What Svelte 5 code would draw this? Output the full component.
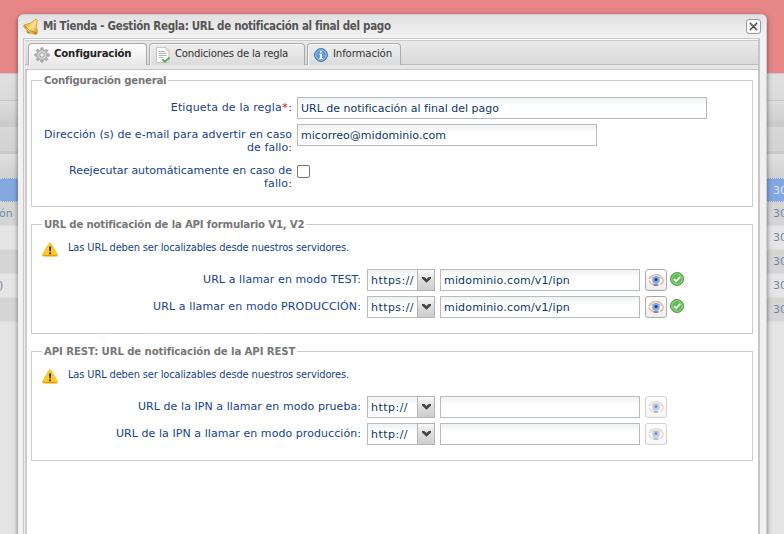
<script>
  const rows = [
    { kind: 'selected', left: '', right: '30' },
    { kind: 'dark', left: 'ón', right: '30' },
    { kind: 'light', left: '', right: '30' },
    { kind: 'dark', left: '', right: '30' },
    { kind: 'light', left: ')', right: '30' },
    { kind: 'dark', left: '', right: '30' }
  ];
  const hint = 'Las URL deben ser localizables desde nuestros servidores.';
  const groups = [
    {
      title: 'URL de notificación de la API formulario V1, V2', width: 260,
      urls: [
        { label: 'URL a llamar en modo TEST:', width: 158, scheme: 'https://', sw: 43, value: 'midominio.com/v1/ipn' },
        { label: 'URL a llamar en modo PRODUCCIÓN:', width: 208, scheme: 'https://', sw: 43, value: 'midominio.com/v1/ipn' }
      ]
    },
    {
      title: 'API REST: URL de notificación de la API REST', width: 251,
      urls: [
        { label: 'URL de la IPN a llamar en modo prueba:', width: 223, scheme: 'http://', sw: 37, value: '' },
        { label: 'URL de la IPN a llamar en modo producción:', width: 245, scheme: 'http://', sw: 37, value: '' }
      ]
    }
  ];

  // Spread the tracking so that a caption takes its allotted width.
  function fit(node, width) {
    const natural = node.getBoundingClientRect().width;
    node.style.letterSpacing = (width - natural) / node.textContent.length + 'px';
  }
</script>

<div class="screen">
  <div class="page">
    <div class="banner"></div>
    <div class="bar bar1"></div>
    <div class="bar bar2"></div>
    <div class="bar bar3"></div>
    <div class="bar bar4"></div>
    {#each rows as r}
      <div class="row {r.kind}"><span>{r.left}</span><span class="num">{r.right}</span></div>
    {/each}
  </div>

  <div class="window">
    <header>
      <svg class="bell" width="16" height="18" viewBox="0 0 16 18">
        <defs><linearGradient id="gold" x1="0" y1="0" x2="1" y2="1"><stop offset="0" stop-color="#d58b12"/><stop offset=".3" stop-color="#f3b93c"/><stop offset=".55" stop-color="#ffe58a"/><stop offset="1" stop-color="#d48a13"/></linearGradient></defs>
        <path d="M10.6 3 Q12 .8 13.7 1.4 Q15 2.4 13.9 4.2 Q12.9 8.5 14.4 13.6 Q14.3 16.6 12.6 16.6 Q4.5 14.6 .6 8.4 Q.5 6.8 2.2 6.6 Q7.8 6 10.6 3Z" fill="url(#gold)" stroke="#c98a22" stroke-width=".7"/>
        <path d="M1.2 7.8 Q5.5 13.4 13.4 15.2" fill="none" stroke="#b9791a" stroke-width=".9"/>
        <path d="M3.6 12.4 Q3.6 16 7.6 15.4Z" fill="#b06f14"/>
      </svg>
      <span class="title"><span use:fit={347}>Mi Tienda - Gestión Regla: URL de notificación al final del pago</span></span>
      <button class="close" aria-label="Cerrar">
        <svg width="9" height="9" viewBox="0 0 9 9"><path d="M1 1 L8 8 M8 1 L1 8" stroke="#444" stroke-width="1.8" stroke-dasharray="1.5 .3"/></svg>
      </button>
    </header>

    <div class="body">
      <nav>
        <div class="tab active">
          <svg width="16" height="16" viewBox="0 0 16 16">
            <g fill="#b5b5b5" stroke="#8a8a8a" stroke-width=".5">
              {#each [0, 45, 90, 135] as a}
                <rect x="6.7" y=".6" width="2.6" height="14.8" rx=".9" transform="rotate({a} 8 8)"/>
              {/each}
            </g>
            <circle cx="8" cy="8" r="5.3" fill="#c6c6c6" stroke="#9a9a9a" stroke-width=".6"/>
            <circle cx="8" cy="8" r="3.7" fill="#d4d4d4"/>
            <circle cx="8" cy="8" r="2.2" fill="#f2f2f2" stroke="#909090" stroke-width=".8"/>
          </svg>
          <span use:fit={77}>Configuración</span>
        </div>
        <div class="tab second">
          <svg width="16" height="16" viewBox="0 0 16 16">
            <path d="M1.5.5H11L14 3.5V15.5H1.5Z" fill="#fafafa" stroke="#c5c5c5"/>
            <path d="M11 .5V3.5H14" fill="#ddd" stroke="#c5c5c5" stroke-width=".7"/>
            <path d="M4 4.5H10M4 6.5H11.5M4 8.5H11.5M4 10.5H8" stroke="#aaa" stroke-width=".9"/>
            <path d="M7.3 12.4 9.8 14.8 14.6 10.6" fill="none" stroke="#60a957" stroke-width="2"/>
          </svg>
          <span use:fit={113}>Condiciones de la regla</span>
        </div>
        <div class="tab third">
          <svg width="14" height="14" viewBox="0 0 14 14">
            <circle cx="7" cy="7" r="6.4" fill="#4f88c3" stroke="#3f73ad"/>
            <circle cx="7" cy="7" r="5.3" fill="#659bd0" stroke="#a9cbed" stroke-width=".8"/>
            <path d="M6 3H8V4.6H6ZM5.4 5.7H8V10H9V11H5.2V10H6.2V6.7H5.4Z" fill="#fff"/>
          </svg>
          <span use:fit={59}>Información</span>
        </div>
      </nav>

      <main>
        <section class="general">
          <h2><span use:fit={122}>Configuración general</span></h2>
          <div class="field">
            <div class="label"><div><span use:fit={111}>Etiqueta de la regla</span><b>*</b>:</div></div>
            <div class="input wide"><span use:fit={198}>URL de notificación al final del pago</span></div>
          </div>
          <div class="field">
            <div class="label">
              <div><span use:fit={248}>Dirección (s) de e-mail para advertir en caso</span></div>
              <div><span use:fit={45}>de fallo:</span></div>
            </div>
            <div class="input mid"><span use:fit={145}>micorreo@midominio.com</span></div>
          </div>
          <div class="field again">
            <div class="label">
              <div><span use:fit={223}>Reejecutar automáticamente en caso de</span></div>
              <div><span use:fit={28}>fallo:</span></div>
            </div>
            <div class="check"></div>
          </div>
        </section>

        {#each groups as g}
          <section class="urls">
            <h2><span use:fit={g.width}>{g.title}</span></h2>
            <div class="hint">
              <svg width="16" height="15" viewBox="0 0 16 15">
                <path d="M8 .9 Q8.8.9 9.3 1.9 L15.2 12 Q16 14.2 14.2 14.2 H1.8 Q0 14.2 .8 12 L6.7 1.9 Q7.2.9 8 .9Z" fill="#ffcb26" stroke="#efb62a" stroke-width=".8"/>
                <path d="M1.2 13.4H14.8" stroke="#dd9a18" stroke-width="1"/>
                <path d="M7 4.5H9.2L8.7 9.5H7.5ZM7.1 10.5H9V12.2H7.1Z" fill="#33270b"/>
              </svg>
              <span use:fit={281}>{hint}</span>
            </div>
            {#each g.urls as u}
              <div class="field">
                <div class="label url"><div><span use:fit={u.width}>{u.label}</span></div></div>
                <div class="combo">
                  <div class="input scheme"><span use:fit={u.sw}>{u.scheme}</span></div>
                  <div class="trigger"><svg width="9" height="6" viewBox="0 0 9 6"><path d="M0 0H2.3L4.5 2.1 6.7 0H9V1.5L4.5 5.7 0 1.5Z" fill="#444"/></svg></div>
                </div>
                <div class="input address">{#if u.value}<span use:fit={126}>{u.value}</span>{/if}</div>
                <div class="eye" class:off={!u.value}>
                  <svg width="16" height="14" viewBox="0 0 16 14">
                    <path d="M.7 7.4 Q3.6 3 8 3 T15.3 7 Q14.6 11.9 8.4 12 Q3.4 11.8 .7 7.4Z" fill="#fff"/>
                    <path d="M.9 5.8 Q3.5 1.7 8.2 1.7 T15.2 6.6 Q15.4 10.2 12 11.6" fill="none" stroke="#e3b496" stroke-width="1.3"/>
                    <path d="M.8 7.6 Q3.2 11.4 6.6 12" fill="none" stroke="#e3b496" stroke-width="1.2"/>
                    <path d="M2.5 5.6 Q8 1.6 13.6 5.6" fill="none" stroke="#c9a28c" stroke-width=".7"/>
                    <circle cx="8" cy="6.9" r="3.9" fill="#83aaea"/>
                    <circle cx="8" cy="6.4" r="1.5" fill="#24395c"/>
                    <path d="M5.8 12H10.4" stroke="#4f4f4f" stroke-width="1.3"/>
                  </svg>
                </div>
                {#if u.value}
                  <svg class="ok" width="14" height="14" viewBox="0 0 14 14">
                    <circle cx="7" cy="7" r="6.5" fill="#4cac45" stroke="#4a9d44"/>
                    <circle cx="7" cy="7" r="5.3" fill="#62bb59" stroke="#b0e0ab" stroke-width=".8"/>
                    <path d="M3.9 7 6.2 9.2 10.2 4.9" fill="none" stroke="#fff" stroke-width="1.7"/>
                  </svg>
                {/if}
              </div>
            {/each}
          </section>
        {/each}
      </main>
    </div>
  </div>
</div>

<style>
  :global(body) { margin: 0; }
  .screen { position: relative; width: 784px; height: 534px; overflow: hidden; background: #e4e4e4; font: 11px/13px "DejaVu Sans", Verdana, sans-serif; }
  .screen * { box-sizing: border-box; }
  span { white-space: nowrap; }
  .banner { height: 73px; background: #e68686; }
  .bar { border-top: 1px solid #c9c9c9; }
  .bar1 { height: 27px; background: linear-gradient(#e0e0e0, #dadada); }
  .bar2 { height: 27px; background: linear-gradient(#dedede, #c9c9c9); }
  .bar3 { height: 26px; border: 0; border-bottom: 2px solid #cacaca; background: linear-gradient(#d8d8d8, #d2d2d2); }
  .bar4 { height: 25px; background: linear-gradient(#e0e0e0, #d0d0d0); }
  .row { height: 24px; display: flex; justify-content: space-between; align-items: center; color: #6f87a8; border-bottom: 1px solid #ddd; }
  .row > span { margin-left: -1px; }
  .num { width: 11px; }
  .dark { background: #d5d5d5; }
  .light { background: #e5e5e5; }
  .selected { background: #84a7e0; border-top: 1px dotted #c5d5ef; border-bottom: 1px dotted #c5d5ef; color: #dce6f5; }
  .window { position: absolute; left: 18px; top: 14px; width: 749px; height: 540px; padding: 0 6px 0 5px; border-radius: 6px 6px 0 0; background: #f1f1f1; border: solid #d0d0d0; border-width: 1px 1px 0 0; box-shadow: 0 2px 5px rgba(0,0,0,.5), inset 0 1px #fff; }
  header { height: 23px; display: flex; align-items: flex-start; margin: 0 -5px; padding: 2px 4px 0 5px; background: linear-gradient(#e1e1e1, #f3f3f3); border-radius: 5px 5px 0 0; }
  .bell { flex: none; margin-top: 1px; }
  .title { flex: 1; padding: 2px 0 0 4px; font: bold 11.5px/14px "DejaVu Sans Condensed", Tahoma, sans-serif; color: #555; }
  .close { width: 15px; height: 15px; margin-top: 2px; padding: 0; border: 1px solid #999; border-radius: 3px; background: #fafafa; display: flex; align-items: center; justify-content: center; }
  .body { height: 520px; background: #fff; border: 1px solid #c7c7c7; border-right-width: 2px; box-shadow: inset 1px 0 #eee, inset 3px 0 #ccc; }
  nav { height: 30px; display: flex; gap: 2px; padding: 3px 0 0 3px; align-items: flex-start; margin-left: 1px; background: linear-gradient(#eaeaea, #d9d9d9); border-top: 1px solid #fff; border-bottom: 4px solid #e7e7e7; box-shadow: inset 0 1px #ccc, inset 0 -1px #bcbcbc; font: 11.3px/14px "DejaVu Sans Condensed", Tahoma, sans-serif; }
  .tab { height: 22px; display: flex; align-items: center; padding: 1px 5px 0; border: 1px solid #aaa; border-bottom: 0; border-radius: 4px 4px 0 0; background: linear-gradient(#ededed, #dcdcdc); box-shadow: inset 1px 1px #f8f8f8; color: #333; }
  .tab svg { flex: none; margin-right: 4px; }
  .tab > span { margin-top: -2px; }
  .active { width: 119px; height: 22px; background: linear-gradient(#fff, #e8e8e8); font-weight: bold; color: #222; }
  .active > svg { margin-top: -1px; }
  .second { width: 156px; }
  .third { width: 94px; padding-left: 6px; }
  .third svg { margin-right: 5px; }
  main { padding: 10px 5px 0 6px; border-top: 1px solid #c7c7c7; margin-left: 1px; }
  section { width: 722px; border: 1px solid #ccc; }
  .general { height: 127px; }
  .urls { height: 110px; margin-top: 17px; }
  h2 { width: max-content; height: 14px; margin: -7px 0 0 10px; padding: 0 2px; background: #fff; color: #777; font: bold 11.3px/14px "DejaVu Sans Condensed", Tahoma, sans-serif; }
  .field { height: 22px; display: flex; margin-top: 5px; }
  h2 + .field { margin-top: 9px; }
  .label { width: 265px; flex: none; padding: 4px 5px 0 0; text-align: right; color: #15428b; white-space: nowrap; }
  .label > div { height: 13px; }
  .label b { color: #d00; font-weight: normal; margin: 0 .5px; }
  .label.url { width: 335px; padding-right: 6px; }
  .again { margin-top: 14px; }
  .input { height: 22px; padding: 4px 3px 0; border: 1px solid #bbb; background: linear-gradient(#eef2f2, #fff 8px); color: #0d3664; line-height: 14px; }
  .wide { width: 410px; }
  .mid { width: 300px; }
  .check { width: 13px; height: 13px; border: 1px solid #767676; border-radius: 2px; margin-top: 5px; background: #fff; }
  .hint { height: 36px; display: flex; padding: 9px 0 0 10px; color: #15428b; font: 11px/14px "DejaVu Sans Condensed", Tahoma, sans-serif; }
  .hint svg { margin: 1px 10px 0 0; }
  .hint + .field { margin-top: 1px; }
  .combo { display: flex; width: 68px; margin-right: 5px; }
  .scheme { width: 50px; border-right: 0; }
  .trigger { width: 18px; height: 22px; border: 1px solid #b4b4b4; background: linear-gradient(#fafafa, #ddd 50%, #cecece); display: flex; justify-content: center; padding-top: 7px; }
  .address { width: 200px; }
  .eye { width: 22px; height: 22px; margin-left: 5px; border: 1px solid #aaa; border-radius: 3px; background: linear-gradient(#fff, #eee); display: flex; align-items: center; justify-content: center; }
  .eye svg { flex: none; }
  .off { opacity: .55; }
  .ok { margin: 3px 0 0 3px; }
</style>
